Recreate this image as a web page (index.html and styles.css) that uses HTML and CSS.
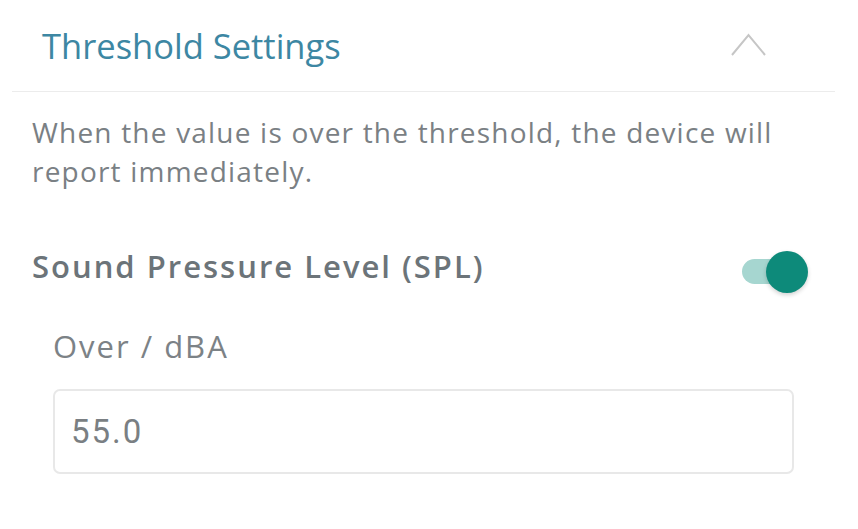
FILE: index.html
```html
<!DOCTYPE html>
<html>
<head>
<meta charset="utf-8">
<link rel="stylesheet" href="styles.css">
</head>
<body>
<div class="panel">
  <div class="header">
    <span class="title">Threshold Settings</span>
    <svg class="chevron" width="35" height="23" viewBox="0 0 35 23">
      <polyline points="1,22 17.5,2 34,22" fill="none" stroke="#c6c6c6" stroke-width="2"/>
    </svg>
  </div>
  <div class="body">
    <p class="desc">When the value is over the threshold, the device will report immediately.</p>
    <div class="row">
      <span class="label">Sound Pressure Level (SPL)</span>
      <span class="toggle"><span class="track"></span><span class="knob"></span></span>
    </div>
    <div class="field">
      <div class="field-label">Over / dBA</div>
      <div class="input">55.0</div>
    </div>
  </div>
</div>
</body>
</html>
```
FILE: styles.css
```css
html, body { margin: 0; padding: 0; background: #fff; }
body { font-family: "Open Sans", Lato, sans-serif; width: 858px; height: 529px; overflow: hidden; }
.panel { padding: 0 23px 0 12px; }
.header {
  display: flex; align-items: center; justify-content: space-between;
  height: 92px; border-bottom: 1px solid #ececec;
  padding: 0 69px 0 30px; box-sizing: border-box;
}
.title { font-size: 34.5px; color: #3d87a3; }
.chevron { display: block; margin-top: -2px; }
.body { padding: 0 0 0 20px; }
.desc {
  margin: 0; padding-top: 21px; font-size: 28px; line-height: 39px; color: #7a8084;
  letter-spacing: 1.2px; width: 770px;
}
.row {
  display: flex; align-items: flex-start; justify-content: space-between;
  margin-top: 54px; padding-right: 27px;
}
.label { font-size: 31px; line-height: 43px; font-weight: 600; color: #6c7479; letter-spacing: 2px; }
.toggle { position: relative; width: 66px; height: 43px; display: block; margin-top: 6px; }
.track { position: absolute; left: 0; top: 8px; width: 54px; height: 25px; border-radius: 13px; background: #a6d6d0; }
.knob { position: absolute; right: 0; top: 0; width: 42px; height: 42px; border-radius: 50%; background: #0d8a7a; box-shadow: 0 2px 4px rgba(0,0,0,0.18); }
.field { padding-left: 21px; margin-top: 32px; }
.field-label { font-size: 31px; color: #7c8286; line-height: 40px; letter-spacing: 2px; }
.input {
  margin-top: 23px; width: 741px; height: 85px; box-sizing: border-box;
  border: 2px solid #e8e8e8; border-radius: 7px;
  padding-left: 16px; display: flex; align-items: center;
  font-family: Roboto, sans-serif; font-size: 33px; letter-spacing: 2px; color: #7a7f83;
}
```
